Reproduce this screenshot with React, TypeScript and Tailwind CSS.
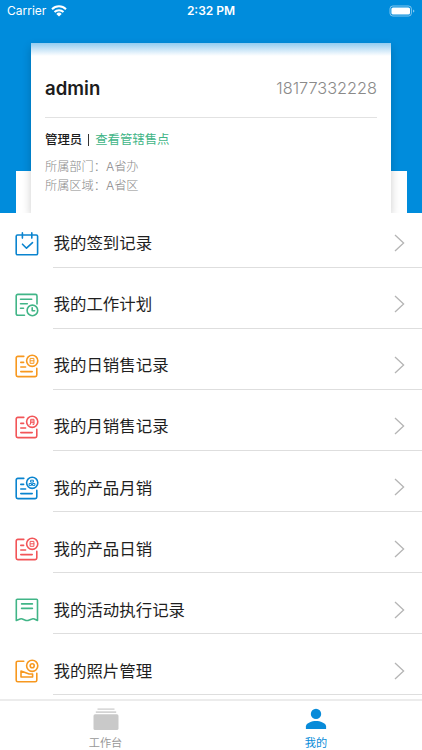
import React from 'react';

const BLUE = '#0a84cf';
const GREEN = '#41b587';
const ORANGE = '#f7981f';
const RED = '#f25558';

interface IconProps {
  color: string;
  children: React.ReactNode;
}

function RowIcon({ color, children }: IconProps) {
  return (
    <svg
      className="h-6 w-6 shrink-0"
      viewBox="0 0 24 24"
      fill="none"
      stroke={color}
      strokeWidth="1.6"
      strokeLinecap="round"
      strokeLinejoin="round"
    >
      {children}
    </svg>
  );
}

function CheckinIcon() {
  return (
    <RowIcon color={BLUE}>
      <rect x="1.2" y="3" width="21.4" height="19.8" rx="1.3" />
      <path d="M7.4 .9v5.2M16.8 .9v5.2M7.5 12.2l4 4 6-5.6" />
    </RowIcon>
  );
}

function PlanIcon() {
  return (
    <RowIcon color={GREEN}>
      <path d="M9.5 22.3H2.8a1.6 1.6 0 0 1-1.6-1.6V3a1.6 1.6 0 0 1 1.6-1.6h17.6A1.6 1.6 0 0 1 22 3v8" />
      <path d="M5.5 6.3h11.2M5.5 10.8h6.8M5.5 15.3h3" />
      <circle cx="17.4" cy="17.4" r="5.3" />
      <path d="M17.2 14.8v3h2.4" />
    </RowIcon>
  );
}

function ReportIcon({ color, mark }: { color: string; mark: React.ReactNode }) {
  return (
    <RowIcon color={color}>
      <path d="M8.8 2.4h-6a1.6 1.6 0 0 0-1.6 1.6v17a1.6 1.6 0 0 0 1.6 1.6h17.4a1.6 1.6 0 0 0 1.6-1.6v-6.6" />
      <path d="M5.8 8.4h2.8M5.8 13h4.8M5.8 17.6h11.4" />
      <circle cx="17.2" cy="6.8" r="5.6" />
      <g strokeWidth="1">{mark}</g>
    </RowIcon>
  );
}

const dayMark = <path d="M15.5 4.4h3.4v4.9h-3.4zM15.5 6.8h3.4" />;
const monthMark = <path d="M15 9.7l.7-1.7V4.3h3.3v5.1h-1M15.7 6h3.1M15.7 7.7h3.1" />;
const productMark = <path d="M16 4.2h2.4v1.9H16zM14.5 7.5h2v1.9h-2zM17.9 7.5h2v1.9h-2z" />;

function ActivityIcon() {
  return (
    <RowIcon color={GREEN}>
      <path d="M2.3 1.3h19.2a1 1 0 0 1 1 1v20.2l-3.2-1.5q-1.2-.5-2.3 0l-4 1.4q-1 .3-2 0l-3.7-1.4q-1-.4-2.2 0l-3.8 1.4V2.3a1 1 0 0 1 1-1z" />
      <path d="M6.6 5.9h10.8M6.6 10.4h10.8" />
    </RowIcon>
  );
}

function PhotoIcon() {
  return (
    <RowIcon color={ORANGE}>
      <path d="M8.8 2.2h-6a1.6 1.6 0 0 0-1.6 1.6v17.4a1.6 1.6 0 0 0 1.6 1.6h17.4a1.6 1.6 0 0 0 1.6-1.6v-6.8" />
      <circle cx="17.2" cy="6.8" r="5.6" />
      <circle cx="17.2" cy="6.8" r="2" />
      <path d="M6 12v6h11.6v-3h-3.4z" />
    </RowIcon>
  );
}

const rows = [
  { text: '我的签到记录', icon: <CheckinIcon /> },
  { text: '我的工作计划', icon: <PlanIcon /> },
  { text: '我的日销售记录', icon: <ReportIcon color={ORANGE} mark={dayMark} /> },
  { text: '我的月销售记录', icon: <ReportIcon color={RED} mark={monthMark} /> },
  { text: '我的产品月销', icon: <ReportIcon color={BLUE} mark={productMark} /> },
  { text: '我的产品日销', icon: <ReportIcon color={RED} mark={dayMark} /> },
  { text: '我的活动执行记录', icon: <ActivityIcon /> },
  { text: '我的照片管理', icon: <PhotoIcon /> },
];

function StatusBar() {
  return (
    <div className="grid h-[22px] grid-cols-3 items-center px-[7px] text-[12px] leading-none text-white">
      <div className="flex items-center gap-[5px]">
        <span>Carrier</span>
        <svg className="h-[12px] w-[16px]" viewBox="0 0 16 12" fill="none" stroke="white" strokeWidth="2">
          <path d="M1 4.2a10 10 0 0 1 14 0M3.5 7a6.4 6.4 0 0 1 9 0" />
          <path d="M8 11.6L5.3 8.9a3.9 3.9 0 0 1 5.4 0z" fill="white" stroke="none" />
        </svg>
      </div>
      <span className="text-center font-semibold">2:32 PM</span>
      <svg className="h-[12px] w-[26px] justify-self-end" viewBox="0 0 26 12">
        <rect x="1" y="1" width="21.4" height="10" rx="2.8" fill="none" stroke="white" strokeOpacity=".5" />
        <rect x="2.4" y="2.4" width="18.6" height="7.2" rx="1.6" fill="white" />
        <path d="M24 4.4q1.4.5 1.4 1.6T24 7.6z" fill="white" fillOpacity=".5" />
      </svg>
    </div>
  );
}

function ProfileCard() {
  return (
    <div className="relative mx-[31px] h-[170px] bg-white px-[14px] shadow-[0_4px_9px_rgba(0,0,0,0.2)]">
      <div className="absolute inset-x-0 top-0 h-[13px] bg-gradient-to-b from-[#93cbef] to-white" />
      <div className="relative flex h-[75px] items-center justify-between border-b border-[#e2e2e2] pt-[17px]">
        <span className="text-[18.6px] font-semibold text-[#1c1c1c]">admin</span>
        <span className="text-[16.3px] font-light text-[#8a8a8a]">18177332228</span>
      </div>
      <div className="mt-[13px] flex h-[18px] items-center text-[12.4px]">
        <span className="font-medium text-[#1c1c1c]">管理员</span>
        <span className="mx-[6px] h-[12px] w-px bg-[#333]" />
        <span className="text-[#41b587]">查看管辖售点</span>
      </div>
      <div className="mt-[8px] text-[12.2px] leading-[19px] font-light text-[#8a8a8a]">
        <p>所属部门：A省办</p>
        <p>所属区域：A省区</p>
      </div>
    </div>
  );
}

function MenuRow({ text, icon }: { text: string; icon: React.ReactNode }) {
  return (
    <div className="flex h-[48.1px] shrink-0 pl-[15px]">
      <div className="flex items-center">{icon}</div>
      <div className="ml-[14px] flex flex-1 items-center justify-between border-b border-[#dedede] pr-[17px]">
        <span className="pt-px pl-[0.5px] text-[16.45px] text-[#1f1f1f]">{text}</span>
        <svg className="h-[18px] w-[11px]" viewBox="0 0 11 18" fill="none" stroke="#b5b5b5" strokeWidth="1.3">
          <path d="M1 1l8.6 8L1 17" />
        </svg>
      </div>
    </div>
  );
}

function TabBar() {
  return (
    <div className="grid h-[51px] shrink-0 grid-cols-2 border-t-2 border-[#ececec] bg-white text-[11.2px] leading-4">
      <div className="flex flex-col items-center pt-[7px] text-[#999]">
        <svg className="h-[23px] w-[26px]" viewBox="0 0 26 23" fill="#c9c9c9">
          <rect x="4.5" y="0.5" width="17" height="1.2" />
          <rect x="2.8" y="3.4" width="20.4" height="1.4" />
          <rect x=".5" y="6.3" width="25" height="15.8" rx="1.6" />
        </svg>
        <span className="mt-[4px]">工作台</span>
      </div>
      <div className="flex flex-col items-center pt-[7px] pr-px text-[#088bd9]">
        <svg className="h-[23px] w-[22px]" viewBox="0 0 22 23" fill="#088bd9">
          <circle cx="11" cy="5.9" r="5.2" />
          <path d="M.9 20.9v-2.5c0-3.4 6.2-5.4 10.1-5.4s10.1 2 10.1 5.4v2.5z" />
        </svg>
        <span className="mt-[4px]">我的</span>
      </div>
    </div>
  );
}

export default function App() {
  return (
    <div className="flex h-[750px] w-[422px] flex-col overflow-hidden bg-white font-[Inter,'Noto_Sans_CJK_SC',sans-serif]">
      <header className="relative h-[213px] shrink-0 overflow-hidden bg-[#008cdc]">
        <StatusBar />
        <div className="absolute inset-x-[15.5px] bottom-0 h-[42px] bg-white" />
        <div className="mt-[21px]">
          <ProfileCard />
        </div>
      </header>
      <main className="flex min-h-0 flex-1 flex-col gap-[13px] overflow-hidden pt-[6.5px]">
        {rows.map((row) => (
          <MenuRow key={row.text} text={row.text} icon={row.icon} />
        ))}
      </main>
      <TabBar />
    </div>
  );
}
